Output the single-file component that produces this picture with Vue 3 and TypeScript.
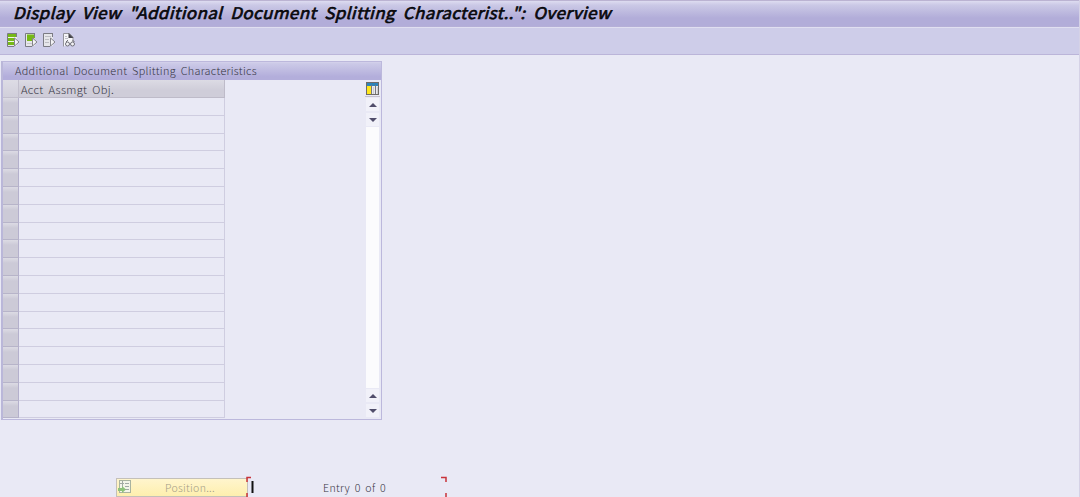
<script setup lang="ts">
const rowCount = 18
const title = 'Display View "Additional Document Splitting Characterist..": Overview'
</script>

<template>
  <main class="window">
    <header class="titlebar">
      <svg class="title" width="640" height="26">
        <text x="13" y="18" textLength="598" lengthAdjust="spacingAndGlyphs">{{ title }}</text>
      </svg>
    </header>
    <nav class="toolbar">
      <svg v-for="kind in 3" :key="kind" class="tool" width="15" height="15" viewBox="0 0 15 15">
        <rect x="1.500" y="1" width="9.500" height="12" fill="#e6e6ea" />
        <path v-if="kind === 1" d="M2 1h9v3H2zM2 5h7v3H2zM2 9h6v3H2z" fill="#76b916" />
        <path v-if="kind === 1" d="M2 4.500h9M2 8.500h6" stroke="#f0f4ea" />
        <path v-else-if="kind === 2" d="M3 1.500h8v3L8 8H3z" fill="#76b916" />
        <path v-else d="M3 3.500h6M3 6.500h4M3 9.500h4" stroke="#bdbdc3" />
        <path v-if="kind === 2" d="M3 10.500h5" stroke="#c8c8cc" />
        <path d="M11 .500H1.500V13.500H8M10.500 0v4" fill="none" stroke="#7b7b83" />
        <path d="M8.500 5v8l4.500-4z" fill="#f4f4f7" stroke="#85858b" />
      </svg>
      <svg class="tool glasses" width="15" height="15" viewBox="0 0 15 15">
        <path d="M1.500 13.500V.500H7.500l3.500 3.500v5" fill="#f5f5f8" stroke="#94949b" />
        <path d="M6.500 0v5h5z" fill="#44444b" />
        <path d="M3 3.500h2M3 5.500h3" stroke="#bcbcc3" />
        <g fill="#f2f2f5" stroke="#707078">
          <circle cx="5.500" cy="11" r="2" />
          <circle cx="10.500" cy="11" r="2" />
          <path d="M4 9l2-2M12.500 9l-2-2" />
        </g>
      </svg>
    </nav>

    <section class="panel">
      <div class="panel-title">
        <svg width="300" height="18">
          <text x="12" y="12" textLength="242" lengthAdjust="spacingAndGlyphs">Additional Document Splitting Characteristics</text>
        </svg>
      </div>
      <div class="panel-body">
        <div class="table">
          <div class="head">
            <span class="selector"></span>
            <span class="column">
              <svg width="150" height="17">
                <text x="2" y="14" textLength="93" lengthAdjust="spacingAndGlyphs">Acct Assmgt Obj.</text>
              </svg>
            </span>
          </div>
          <div class="rows">
            <div v-for="row in rowCount" :key="row" class="row">
              <span class="selector"></span>
              <span class="cell"></span>
            </div>
          </div>
        </div>
        <div class="scroll">
          <svg class="config" width="15" height="17" viewBox="0 0 15 17">
            <path d="M0 16.500h15" stroke="#c4c1cd" />
            <rect x="1.500" y="2.500" width="12" height="12" fill="#e9e9ec" stroke="#6e6b68" />
            <rect x="2" y="6" width="4" height="8" fill="#ffe61a" />
            <rect x="2" y="3" width="11" height="3" fill="#2e83b8" />
            <path d="M6.500 5v9M10.500 5v9" stroke="#77787d" />
            <path d="M8.500 7v7M12.500 7v7" stroke="#cccdd2" />
          </svg>
          <span class="arrow"><i class="up"></i></span>
          <span class="arrow"><i class="down"></i></span>
          <span class="track"></span>
          <span class="arrow"><i class="up"></i></span>
          <span class="arrow"><i class="down"></i></span>
        </div>
      </div>
    </section>

    <footer class="footer">
      <button class="position" disabled>
        <svg width="130" height="17">
          <rect x="2.500" y="1.500" width="11" height="12" fill="#f4f5ea" stroke="#a9b3a0" />
          <path d="M5.500 2v10M3 4.500h4M8 4.500h4M8 7.500h4M8 10.500h4" fill="none" stroke="#a3aaa6" />
          <path d="M1 9h4V7l4 3.500-4 3.500v-2H1z" fill="#8fc27b" />
          <text x="48" y="13" textLength="50" lengthAdjust="spacingAndGlyphs">Position...</text>
        </svg>
      </button>
      <div class="entry">
        <svg width="202" height="21">
          <path d="M1 21v-4M1 6V1.500H5M195 1.500h5V6M200 21v-4" fill="none" stroke="#c83239" stroke-width="1.500" />
          <path d="M6.500 5v12" stroke="#111" stroke-width="2" />
          <text x="77" y="16" textLength="63" lengthAdjust="spacingAndGlyphs">Entry 0 of 0</text>
        </svg>
      </div>
    </footer>
  </main>
</template>

<style>
body { margin: 0; overflow: hidden; }
</style>

<style scoped>
.window {
  display: flex;
  flex-direction: column;
  box-sizing: border-box;
  width: 1080px;
  height: 497px;
  overflow: hidden;
  background: #e9e9f5;
  border-right: 1px solid #d5d2e6;
  font-family: "Noto Sans CJK JP", sans-serif;
}
svg { display: block; flex: none; overflow: visible; }
text { font-family: "Noto Sans CJK JP", sans-serif; font-size: 10.500px; font-weight: 300; letter-spacing: .3px; word-spacing: 2px; fill: #35343f; }
.titlebar {
  box-sizing: border-box;
  height: 27px;
  border-top: 1px solid #bbb3d2;
  background: linear-gradient(#dddcf0 0, #cbc9e6 4px, #b2add9 17px, #b2add9 25px, #b8b2d6);
}
.title text { font-size: 16px; font-style: italic; font-weight: 400; letter-spacing: .4px; word-spacing: 3.500px; fill: #08080c; stroke: #08080c; stroke-width: .65px; }
.toolbar {
  display: flex;
  align-items: flex-start;
  gap: 3px;
  box-sizing: border-box;
  height: 28px;
  padding: 5px 0 0 6px;
  border-top: 1px solid #e0dff1;
  border-bottom: 1px solid #bbb5d9;
  background: #cecde9;
}
.tool.glasses { margin-left: 2px; }
.panel {
  box-sizing: border-box;
  width: 381px;
  height: 359px;
  margin: 6px 0 0 1px;
  border: 1px solid #bcb8dc;
  border-left: 2px solid #bab7d9;
}
.panel-title {
  box-sizing: border-box;
  height: 18px;
  border-top: 1px solid #d2cfea;
  background: linear-gradient(#cdcbe8, #b3aedb 80%);
}
.panel-body { display: flex; justify-content: space-between; height: 339px; padding-right: 1px; }
.table { width: 222px; }
.head, .row { display: grid; grid-template-columns: 16px 1fr; }
.head { height: 18px; }
.selector {
  box-sizing: border-box;
  border-right: 1px solid #b4b0cc;
  border-bottom: 1px solid #b7b4c9;
  background: linear-gradient(#dcdbe4, #cccad7 5px, #cccad7);
}
.head .selector { border-color: #c2bfcd; background: linear-gradient(#dddce5, #d1cfdb); }
.column {
  box-sizing: border-box;
  border-right: 1px solid #bebbc9;
  border-bottom: 1px solid #bebbc9;
  background: linear-gradient(#dcdbe4, #cfcdd9 60%);
}
.rows { display: grid; grid-template-rows: repeat(18, 1fr); height: 320.500px; }
.cell { border-right: 1px solid #cfcde0; border-bottom: 1px solid #cfcde0; }
.scroll { display: flex; flex-direction: column; width: 15px; height: 338px; }
.arrow {
  display: flex;
  align-items: center;
  justify-content: center;
  width: 13px;
  height: 13px;
  margin: 1px;
  background: #f1f1f9;
}
.arrow i { border: 4px solid transparent; }
.arrow .up { border-top: 0; border-bottom-color: #504d6b; }
.arrow .down { border-bottom: 0; border-top-color: #504d6b; }
.track { flex: 1; width: 13px; margin-left: 1px; background: #fbfbfd; }
.footer { display: flex; height: 21px; margin: 56px 0 0 116px; }
.position {
  box-sizing: border-box;
  width: 132px;
  height: 19px;
  margin: 2px 0 0;
  padding: 0;
  border: 1px solid #c4c0b9;
  background: linear-gradient(#fff5cd, #feefae);
}
.position text { fill: #a49d87; }
.entry { width: 202px; margin-left: -2px; }
</style>
